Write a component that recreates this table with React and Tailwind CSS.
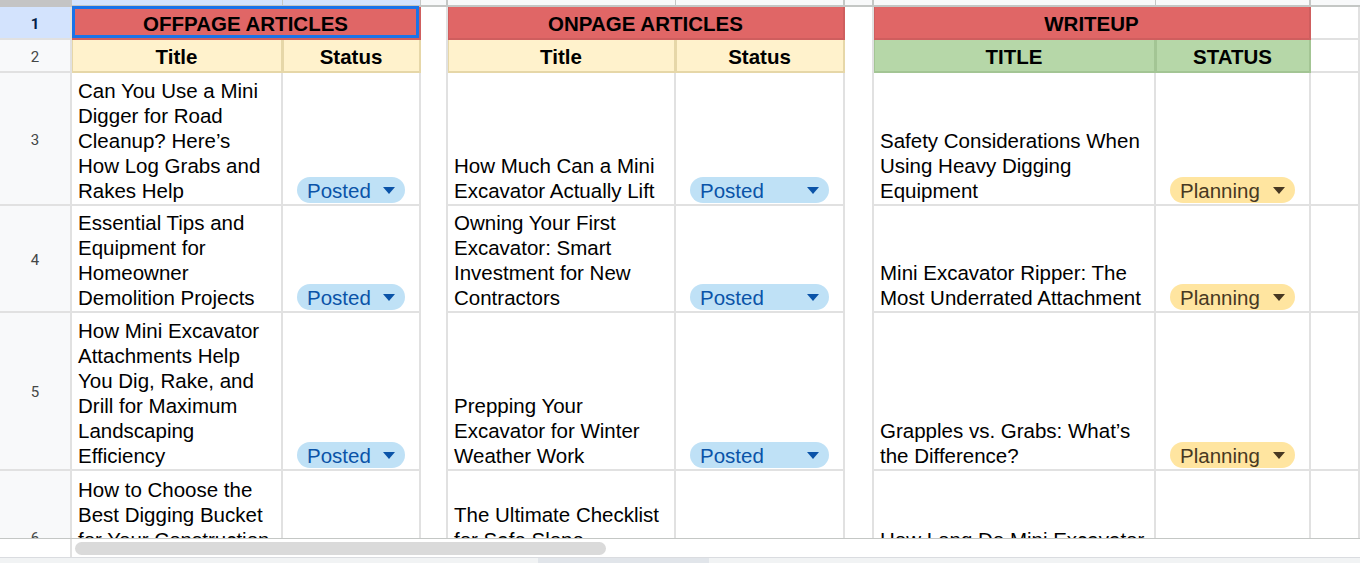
import React from "react";

const GRID = "grid grid-cols-[72px_211px_138px_27px_228px_169px_29px_282px_155px_1fr]";
const FONT = { fontFamily: '"Liberation Sans", Arial, sans-serif' };

function RowNum({ n, selected }) {
  return (
    <div
      className={
        "flex items-center justify-center border-r-2 border-b-2 border-[#e1e1e1] pt-[3px] text-[15px] " +
        (selected ? "bg-[#d3e3fd] font-bold text-[#041e49]" : "bg-[#f8f9fa] text-[#444746]")
      }
      style={{ fontFamily: 'Roboto, "Liberation Sans", Arial, sans-serif' }}
    >
      {n}
    </div>
  );
}

function Spacer() {
  return <div className="border-r-2 border-[#e1e1e1] bg-white" />;
}

function TextCell({ lines }) {
  return (
    <div className="flex flex-col justify-end overflow-hidden border-r-2 border-b-2 border-[#e1e1e1] bg-white px-[6px] pb-[1px] text-[20.5px] leading-[25px] text-black">
      {lines.map((l, i) => (
        <div key={i} className="whitespace-nowrap">
          {l}
        </div>
      ))}
    </div>
  );
}

function Caret({ color }) {
  return (
    <svg width="12" height="7" viewBox="0 0 12 7" className="shrink-0">
      <path d="M0 0 L12 0 L6 7 Z" fill={color} />
    </svg>
  );
}

function ChipCell({ kind }) {
  const posted = kind === "Posted";
  return (
    <div className="flex items-end border-r-2 border-b-2 border-[#e1e1e1] bg-white px-[14px] pb-[1px]">
      <div
        className={
          "flex h-[26px] w-full items-center justify-between rounded-full pl-[10px] pr-[10px] text-[20.5px] leading-none " +
          (posted ? "bg-[#bfe1f6] text-[#0a53a8]" : "bg-[#ffe5a0] text-[#473822]")
        }
      >
        <span className="pt-[2px]">{kind}</span>
        <Caret color={posted ? "#0a53a8" : "#473822"} />
      </div>
    </div>
  );
}

function Empty() {
  return <div className="border-r-2 border-b-2 border-[#e1e1e1] bg-white" />;
}

const rows = [
  {
    n: 3,
    h: "h-[133px]",
    a: ["Can You Use a Mini", "Digger for Road", "Cleanup? Here\u2019s", "How Log Grabs and", "Rakes Help"],
    b: "Posted",
    d: ["How Much Can a Mini", "Excavator Actually Lift"],
    e: "Posted",
    g: ["Safety Considerations When", "Using Heavy Digging", "Equipment"],
    hs: "Planning",
  },
  {
    n: 4,
    h: "h-[107px]",
    a: ["Essential Tips and", "Equipment for", "Homeowner", "Demolition Projects"],
    b: "Posted",
    d: ["Owning Your First", "Excavator: Smart", "Investment for New", "Contractors"],
    e: "Posted",
    g: ["Mini Excavator Ripper: The", "Most Underrated Attachment"],
    hs: "Planning",
  },
  {
    n: 5,
    h: "h-[158px]",
    a: ["How Mini Excavator", "Attachments Help", "You Dig, Rake, and", "Drill for Maximum", "Landscaping", "Efficiency"],
    b: "Posted",
    d: ["Prepping Your", "Excavator for Winter", "Weather Work"],
    e: "Posted",
    g: ["Grapples vs. Grabs: What\u2019s", "the Difference?"],
    hs: "Planning",
  },
  {
    n: 6,
    h: "h-[134px]",
    a: ["How to Choose the", "Best Digging Bucket", "for Your Construction", "Project: A Buyer\u2019s", "Guide"],
    b: "Posted",
    d: ["The Ultimate Checklist", "for Safe Slope", "Excavation with Mini", "Excavators"],
    e: "Posted",
    g: ["How Long Do Mini Excavator", "Attachments Last? Tips for", "Maintenance"],
    hs: "Planning",
  },
];

function SubHeader({ label, tone }) {
  const cls =
    tone === "yellow"
      ? "bg-[#fff2cc] border-[#e6d7a8] shadow-[inset_1px_0_0_#e6d7a8]"
      : "bg-[#b6d7a8] border-[#a3c594] shadow-[inset_1px_0_0_#a3c594]";
  return (
    <div className={"flex items-end justify-center border-r-2 border-b-2 pb-[2px] text-[20.5px] font-bold leading-[25px] text-black " + cls}>
      {label}
    </div>
  );
}

function TitleHeader({ label, selected }) {
  return (
    <div className="relative col-span-2 flex items-end justify-center border-r-2 border-b-2 border-[#cf5e5e] bg-[#e06666] pb-[2px] text-[20.5px] font-bold leading-[25px] text-black shadow-[inset_1px_0_0_#cf5e5e]">
      {label}
      {selected && (
        <div className="pointer-events-none absolute -top-[1px] left-0 right-0 bottom-0 border-[3px] border-[#1a73e8]" />
      )}
    </div>
  );
}

export default function App() {
  return (
    <div className="h-[563px] w-[1360px] overflow-hidden bg-white" style={FONT}>
      <div className="h-[538px] overflow-hidden">
        {/* column header band */}
        <div className={GRID + " h-[7px]"}>
          <div className="border-b-2 border-r-2 border-[#c4c4c4] bg-[#c4c4c4]" />
          <div className="border-b-2 border-r border-[#c4c7c5] bg-[#d3e3fd]" />
          <div className="border-b-2 border-r border-[#c4c7c5] bg-[#d3e3fd]" />
          <div className="border-b-2 border-r-2 border-[#c4c7c5] bg-[#f8f9fa]" />
          <div className="border-b-2 border-r border-[#c4c7c5] bg-[#f8f9fa]" />
          <div className="border-b-2 border-r-2 border-[#c4c7c5] bg-[#f8f9fa]" />
          <div className="border-b-2 border-r-2 border-[#c4c7c5] bg-[#f8f9fa]" />
          <div className="border-b-2 border-r border-[#c4c7c5] bg-[#f8f9fa]" />
          <div className="border-b-2 border-r-2 border-[#c4c7c5] bg-[#f8f9fa]" />
          <div className="border-b-2 border-[#c4c7c5] bg-[#f8f9fa]" />
        </div>

        {/* row 1 */}
        <div className={GRID + " h-[33px]"}>
          <RowNum n={1} selected />
          <TitleHeader label="OFFPAGE ARTICLES" selected />
          <Spacer />
          <TitleHeader label="ONPAGE ARTICLES" />
          <Spacer />
          <TitleHeader label="WRITEUP" />
          <Empty />
        </div>

        {/* row 2 */}
        <div className={GRID + " h-[33px]"}>
          <RowNum n={2} />
          <SubHeader label="Title" tone="yellow" />
          <SubHeader label="Status" tone="yellow" />
          <Spacer />
          <SubHeader label="Title" tone="yellow" />
          <SubHeader label="Status" tone="yellow" />
          <Spacer />
          <SubHeader label="TITLE" tone="green" />
          <SubHeader label="STATUS" tone="green" />
          <Empty />
        </div>

        {rows.map((r) => (
          <div key={r.n} className={GRID + " " + r.h}>
            <RowNum n={r.n} />
            <TextCell lines={r.a} />
            <ChipCell kind={r.b} />
            <Spacer />
            <TextCell lines={r.d} />
            <ChipCell kind={r.e} />
            <Spacer />
            <TextCell lines={r.g} />
            <ChipCell kind={r.hs} />
            <Empty />
          </div>
        ))}
      </div>

      {/* horizontal scrollbar */}
      <div className="flex h-[19px] border-t border-[#c4c7c5] bg-white">
        <div className="w-[72px] shrink-0 border-r-2 border-[#e1e1e1]" />
        <div className="flex-1 pl-[3px] pt-[3px]">
          <div className="h-[13px] w-[531px] rounded-full bg-[#dadada]" />
        </div>
      </div>

      {/* bottom bar */}
      <div className="flex h-[6px] border-t border-[#dadce0] bg-[#f1f3f4]">
        <div className="w-[538px] shrink-0" />
        <div className="w-[171px] shrink-0 bg-[#e1e5ea]" />
      </div>
    </div>
  );
}
